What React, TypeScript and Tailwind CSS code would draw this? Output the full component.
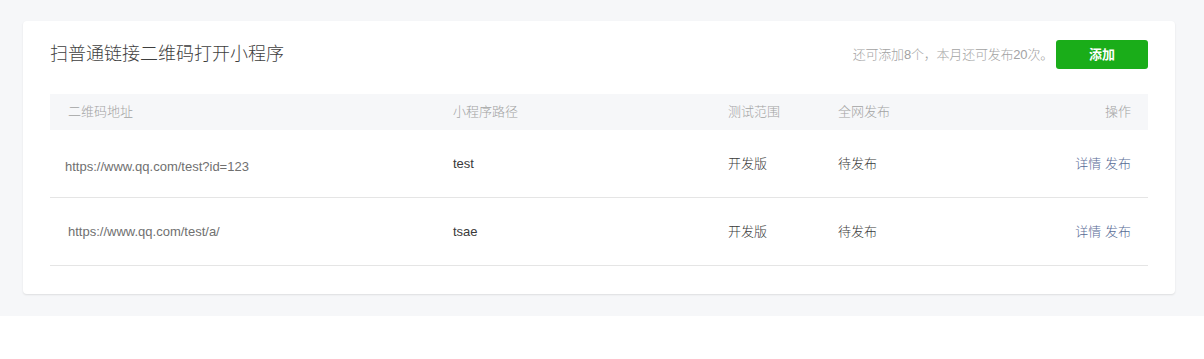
const rows = [
    { url: 'https://www.qq.com/test?id=123', path: 'test', scope: '开发版', status: '待发布', nudge: true },
    { url: 'https://www.qq.com/test/a/', path: 'tsae', scope: '开发版', status: '待发布', nudge: false },
];

const font = { fontFamily: '"Liberation Sans", "Noto Sans CJK SC", sans-serif' };

export default function App() {
    return (
        <div className="bg-white min-h-[359px]" style={font}>
            <div className="bg-[#f6f7f9] pt-[21px] pl-[23px] pr-[29px] pb-[22px]">
                <div className="bg-white rounded-[4px] shadow-[0_1px_2px_rgba(0,0,0,0.1)] px-[27px] pt-[19px] pb-[28px]">
                    <div className="flex items-center justify-between h-[29px]">
                        <h1 className="text-[18px] leading-[24px] text-[#3e3e3e] font-light -mt-[2px]">扫普通链接二维码打开小程序</h1>
                        <div className="flex items-center">
                            <span className="text-[13px] text-[#a3a3a3] font-light mr-[3px] tracking-[-0.2px]">还可添加8个，本月还可发布20次。</span>
                            <button className="w-[92px] h-[29px] bg-[#1aad19] rounded-[3px] text-white text-[13px] font-bold">添加</button>
                        </div>
                    </div>

                    <div className="mt-[25px] text-[13px] font-light">
                        <div className="grid grid-cols-[385px_275px_110px_1fr_120px] h-[36px] items-center bg-[#f6f7f9] text-[#a3a3a3]">
                            <div className="pl-[18px]">二维码地址</div>
                            <div className="pl-[18px]">小程序路径</div>
                            <div className="pl-[18px]">测试范围</div>
                            <div className="pl-[18px]">全网发布</div>
                            <div className="pr-[17px] text-right">操作</div>
                        </div>
                        {rows.map((r, i) => (
                            <div key={i} className="grid grid-cols-[385px_275px_110px_1fr_120px] h-[68px] items-center border-b border-[#e5e5e5] text-[#3a3a3a]">
                                <div className={r.nudge ? 'pl-[15px] mt-[7px] text-[#707070] font-normal' : 'pl-[18px] text-[#707070] font-normal'}>{r.url}</div>
                                <div className="pl-[18px] font-normal">{r.path}</div>
                                <div className="pl-[18px]">{r.scope}</div>
                                <div className="pl-[18px]">{r.status}</div>
                                <div className="pr-[17px] text-right text-[#576b95]">
                                    <a className="cursor-pointer">详情</a> <a className="cursor-pointer">发布</a>
                                </div>
                            </div>
                        ))}
                    </div>
                </div>
            </div>
        </div>
    );
}
